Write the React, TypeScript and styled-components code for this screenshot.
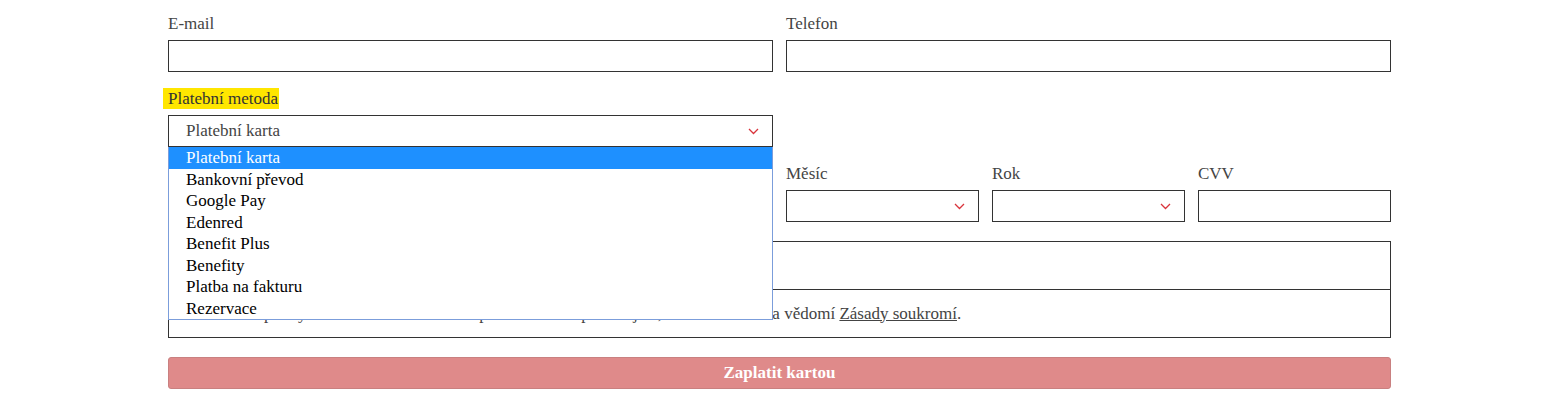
import React, { useState } from "react";
import styled, { createGlobalStyle } from "styled-components";

const GlobalStyle = createGlobalStyle`
  html, body {
    margin: 0;
    padding: 0;
    background: #fff;
  }
  body {
    font-family: "Liberation Serif", "Times New Roman", serif;
    font-size: 17px;
  }
`;

const Form = styled.form`
  width: 1223px;
  margin: 0 0 0 168px;
  padding-top: 14px;
  display: flex;
  flex-direction: column;
`;

const Row = styled.div`
  display: grid;
  grid-template-columns: 605px 605px;
  column-gap: 13px;
  margin-bottom: 17px;
`;

const SubRow = styled.div`
  display: grid;
  grid-template-columns: repeat(3, 193px);
  column-gap: 13px;
`;

const Field = styled.div`
  display: flex;
  flex-direction: column;
  position: relative;
`;

const Label = styled.label`
  display: block;
  height: 18px;
  line-height: 20px;
  margin-bottom: 8px;
  color: #444;
  font-size: 17px;
`;

const Marker = styled.span`
  background: #ffe600;
  padding: 1px 1px 1px 5px;
  margin-left: -5px;
  color: #333;
`;

const Input = styled.div`
  box-sizing: border-box;
  height: 32px;
  border: 1px solid #333;
  background: #fff;
`;

const SelectBox = styled.div`
  box-sizing: border-box;
  height: 32px;
  border: 1px solid #333;
  background: #fff;
  display: flex;
  align-items: center;
  justify-content: space-between;
  padding: 0 13px 0 17px;
  color: #444;
  font-size: 17px;
  cursor: pointer;
`;

const Chevron = () => (
  <svg width="11" height="7" viewBox="0 0 11 7">
    <polyline
      points="1,1 5.5,5.5 10,1"
      fill="none"
      stroke="#d9343c"
      strokeWidth="1.3"
    />
  </svg>
);

const OptionList = styled.ul`
  position: absolute;
  top: 58px;
  left: 0;
  right: 0;
  margin: 0;
  padding: 0;
  list-style: none;
  background: #fff;
  border: 1px solid #7b9ddb;
  border-top: none;
  z-index: 10;
`;

const Option = styled.li<{ $active?: boolean }>`
  height: 21.5px;
  line-height: 21.5px;
  padding-left: 17px;
  font-size: 17px;
  color: ${(p) => (p.$active ? "#fff" : "#000")};
  background: ${(p) => (p.$active ? "#1e90ff" : "transparent")};
`;

const AgreeBox = styled.div`
  border: 1px solid #333;
  margin-top: 2px;
  margin-bottom: 19px;
`;

const AgreeRow = styled.div<{ $h: number }>`
  height: ${(p) => p.$h}px;
  display: flex;
  align-items: center;
  padding-left: 17px;
  color: #444;
  & + & {
    border-top: 1px solid #333;
  }
`;

const Link = styled.a`
  color: #444;
  text-decoration: underline;
`;

const PayButton = styled.button`
  box-sizing: border-box;
  width: 100%;
  height: 32px;
  border: 1px solid #c98080;
  border-radius: 3px;
  background: #df8a8a;
  color: #fff;
  font-family: "Liberation Serif", "Times New Roman", serif;
  font-weight: bold;
  font-size: 17px;
  cursor: pointer;
`;

const methods = [
  "Platební karta",
  "Bankovní převod",
  "Google Pay",
  "Edenred",
  "Benefit Plus",
  "Benefity",
  "Platba na fakturu",
  "Rezervace",
];

export default function App() {
  const [method, setMethod] = useState(methods[0]);
  const [open, setOpen] = useState(true);

  return (
    <>
      <GlobalStyle />
      <Form onSubmit={(e) => e.preventDefault()}>
        <Row>
          <Field>
            <Label>E-mail</Label>
            <Input />
          </Field>
          <Field>
            <Label>Telefon</Label>
            <Input />
          </Field>
        </Row>
        <Row>
          <Field>
            <Label>
              <Marker>Platební metoda</Marker>
            </Label>
            <SelectBox onClick={() => setOpen(!open)}>
              <span>{method}</span>
              <Chevron />
            </SelectBox>
            {open && (
              <OptionList>
                {methods.map((m) => (
                  <Option
                    key={m}
                    $active={m === method}
                    onClick={() => {
                      setMethod(m);
                      setOpen(false);
                    }}
                  >
                    {m}
                  </Option>
                ))}
              </OptionList>
            )}
          </Field>
        </Row>
        <Row>
          <Field>
            <Label>Číslo karty</Label>
            <Input />
          </Field>
          <SubRow>
            <Field>
              <Label>Měsíc</Label>
              <SelectBox>
                <span />
                <Chevron />
              </SelectBox>
            </Field>
            <Field>
              <Label>Rok</Label>
              <SelectBox>
                <span />
                <Chevron />
              </SelectBox>
            </Field>
            <Field>
              <Label>CVV</Label>
              <Input />
            </Field>
          </SubRow>
        </Row>
        <AgreeBox>
          <AgreeRow $h={47} />
          <AgreeRow $h={47}>
            <span>
              Odesláním platby souhlasíte s obchodními podmínkami a potvrzujete,
              že také berete na vědomí <Link>Zásady soukromí</Link>.
            </span>
          </AgreeRow>
        </AgreeBox>
        <PayButton type="submit">Zaplatit kartou</PayButton>
      </Form>
    </>
  );
}
